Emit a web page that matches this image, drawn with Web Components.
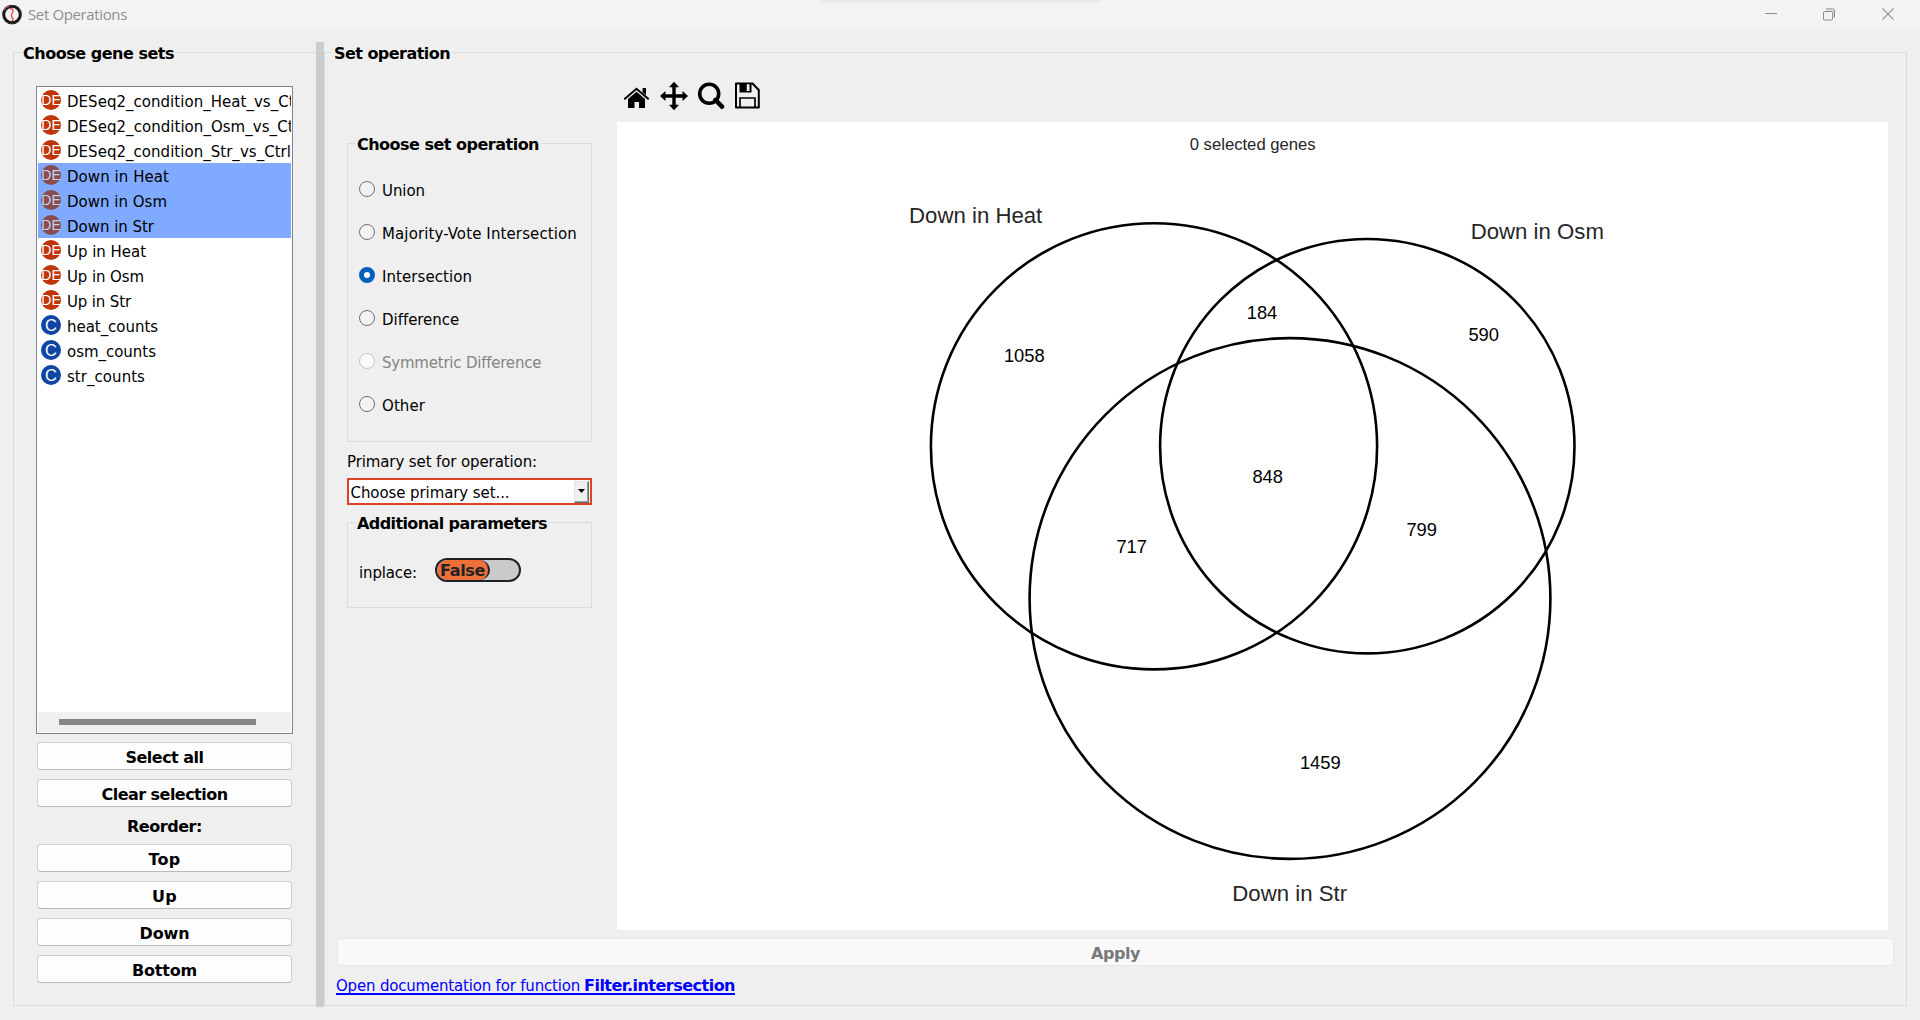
<!DOCTYPE html>
<html lang="en">
<head>
<meta charset="utf-8">
<title>Set Operations</title>
<style>
html,body{margin:0;padding:0}
body{width:1920px;height:1020px;overflow:hidden;background:#efefef;color:#000;font:16.67px/20px "DejaVu Sans Condensed","DejaVu Sans",sans-serif}
</style>
</head>
<body>
<set-operations-window></set-operations-window>
<script>
const define = (name, html, after) => {
  const tpl = document.createElement('template');
  tpl.innerHTML = html;
  customElements.define(name, class extends HTMLElement {
    constructor() {
      super();
      this.attachShadow({mode: 'open'}).append(tpl.content.cloneNode(true));
    }
    connectedCallback() { if (after) after(this, this.shadowRoot); }
  });
};

// Text run that tracks its letters to occupy the width given in "w".
define('fit-text', `<style>:host{display:inline-block;white-space:pre;flex:none}:host([bold]){font-family:"DejaVu Sans",sans-serif;font-weight:bold;font-size:16px}</style><slot></slot>`, el => {
  const target = parseFloat(el.getAttribute('w'));
  const natural = el.getBoundingClientRect().width;
  if (target && natural) el.style.letterSpacing = (target - natural) / el.textContent.length + 'px';
});

define('title-bar', `<style>
:host{display:flex;height:29px;background:#f3f3f3;align-items:center;box-sizing:border-box;padding:0 26px 0 2px;color:#8f8f8f;font:15px/29px "Open Sans","Noto Sans",sans-serif}
.logo{margin-right:6px}
.glow{flex:1;height:29px;display:flex;justify-content:center;padding-right:0;padding-left:30px}
.glow i{width:280px;height:2px;background:#eaeaea;border-radius:0 0 6px 6px;box-shadow:0 0 3px #e6e6e6}
.ctl{display:flex;gap:47px}
.ctl svg{display:block}
.ctl svg:nth-child(2){margin-left:-1px}
</style>
<svg class="logo" width="20" height="20" viewBox="0 0 20 20"><circle cx="10" cy="9.500" r="8.3" fill="#f6f0f0" stroke="#161616" stroke-width="3"/><circle cx="10" cy="9.500" r="9.3" fill="none" stroke="#555" stroke-width="1" stroke-dasharray="1.5 1"/><path d="M2 5Q4 1.8 7.500 1.300" fill="none" stroke="#e66" stroke-width="1"/><path d="M7.500 3.800C10.500 3 12 5.200 10.500 7.500C9 10 9 11.800 10.700 13.200C11.500 14 11 15.500 9.600 16" fill="none" stroke="#e5484d" stroke-width="1.300"/></svg>
<fit-text w="99">Set Operations</fit-text>
<span class="glow"><i></i></span>
<span class="ctl">
<svg width="12" height="13" viewBox="0 0 12 13"><path d="M0 5.500H12" stroke="#8b8b8b"/></svg>
<svg width="12" height="13" viewBox="0 0 12 13" fill="none" stroke="#8b8b8b"><rect x=".5" y="3.500" width="9" height="8.500" rx="1"/><path d="M3 .9H9.500Q11.500 .9 11.500 3V9.500"/><path d="M3 2.200H9.700Q10.300 2.300 10.300 3V9.500" stroke="#cfcfcf"/></svg>
<svg width="12" height="13" viewBox="0 0 12 13"><path d="M.4 .4L11.600 11.600M11.600 .4L.4 11.600" stroke="#8b8b8b" stroke-width="1.100"/></svg>
</span>`);

define('group-box', `<style>
:host{display:flex;flex-direction:column;box-sizing:border-box;border:1px solid #dcdcdc;align-items:stretch}
h2{box-sizing:border-box;font:bold 16px/20px "DejaVu Sans",sans-serif;margin:-10px 0 0 7px;padding:1px 2px 0 2px;height:20px;background:#efefef;align-self:flex-start}
</style><h2><slot name="title"></slot></h2><slot></slot>`);

define('push-button', `<style>
:host{display:flex;box-sizing:border-box;height:28px;border:1px solid #d0d0d0;border-bottom-color:#b9b9b9;border-radius:4px;background:#fdfdfd;align-items:center;justify-content:center;padding-top:3px}
:host([disabled]){background:#f9f9f9;border-color:#e8e8e8;color:#787878}
</style><slot></slot>`);

define('set-item', `<style>
:host{display:flex;height:25px;box-sizing:border-box;padding-left:3px;overflow:hidden;white-space:nowrap;--tone:#c0360c;--ink:#fff}
:host([kind="C"]){--tone:#0f45a3}
:host([selected]){background:#7faaff;--tone:#8b4d4b;--ink:#bfd4f5}
svg{flex:none;margin:2px 6px 0 0}
svg text{fill:var(--ink);text-anchor:middle;font-family:"Liberation Sans",sans-serif}
circle{fill:var(--tone)}
.label{line-height:27px}
</style><svg width="20" height="20" viewBox="0 0 20 20"><circle cx="10" cy="10" r="10"/><text x="10" y="15" font-size="14"></text></svg><span class="label"><slot></slot></span>`,
(el, root) => {
  const t = root.querySelector('text');
  t.textContent = el.getAttribute('kind');
  if (el.getAttribute('kind') === 'C') { t.setAttribute('font-size', 16.5); t.setAttribute('y', 16); }
});

define('set-list', `<style>
:host{display:flex;flex-direction:column;box-sizing:border-box;width:257px;height:648px;border:1px solid #7f858d;background:#fff;padding:1px}
.items{flex:1;overflow:hidden}
.bar{height:20px;background:#f0f0f0;display:flex;align-items:center;padding-left:21px}
.bar i{width:197px;height:6px;background:#868686}
</style><div class="items"><slot></slot></div><div class="bar"><i></i></div>`);

define('radio-option', `<style>
:host{display:flex;align-items:center;height:43px}
i{box-sizing:border-box;width:16px;height:16px;border:1px solid #6f6f6f;border-radius:50%;background:#f3f3f3;margin-right:7px;flex:none}
:host([checked]) i{border:5px solid #0060bb;background:#fff}
:host([disabled]){color:#848484}
:host([disabled]) i{border-color:#c6c6c6;background:#f9f9f9}
span{padding-top:5px}
</style><i></i><span><slot></slot></span>`);

define('combo-box', `<style>
:host{display:flex;box-sizing:border-box;width:245px;height:27px;border:2px solid #dc4326;background:#fff;padding:0 1px 0 1.500px}
span{flex:1;line-height:25px}
b{box-sizing:border-box;width:15px;height:22px;margin-top:1px;background:#f0f0f0;border:1px solid #e3e3e3;border-right:1px solid #696969;border-bottom:1px solid #696969;box-shadow:inset -1px -1px #a0a0a0;display:flex;justify-content:center;padding-top:7px}
svg{display:block}
</style><span><slot></slot></span><b><svg width="7" height="4" viewBox="0 0 7 4"><path d="M0 0H7L3.500 4Z"/></svg></b>`);

define('toggle-switch', `<style>
:host{display:flex;box-sizing:border-box;width:86px;height:24px;border:2px solid #202027;border-radius:12px;background:#cacaca;overflow:hidden}
b{box-sizing:border-box;width:53px;height:20px;border-right:2px solid #202027;border-radius:10px;background:#ec7038;color:#222;line-height:22px;padding-left:3px}
</style><b><slot></slot></b>`);

define('plot-toolbar', `<style>
:host{display:flex;height:30px;align-items:flex-start}
svg{display:block}
</style>
<svg width="27" height="30" viewBox="0 0 27 30"><path d="M1.300 18.300L13.500 7.800L25.700 18.300" fill="none" stroke="#000" stroke-width="2.100"/><path d="M19.600 7H23V14L19.600 11.200Z"/><path d="M13.500 10.700L22 18V27H16V21H11.500V27H5V18Z"/></svg>
<svg style="margin-left:9px" width="30" height="30" viewBox="0 0 30 30"><path d="M15 .7L20 6.300H16.700V13.300H23.500V10L29 15L23.500 20V16.700H16.700V23.700H20L15 29.300L10 23.700H13.300V16.700H6.500V20L1 15L6.500 10V13.300H13.300V6.300H10Z"/></svg>
<svg style="margin-left:8px" width="28" height="30" viewBox="0 0 28 30"><circle cx="12.200" cy="12.700" r="9.500" fill="none" stroke="#000" stroke-width="3.600"/><path d="M18.500 19L25 25.700" stroke="#000" stroke-width="4.600" stroke-linecap="round"/></svg>
<svg style="margin-left:9px" width="27" height="30" viewBox="0 0 27 30"><path d="M2 2.500H18.500L24.800 9V26.500H2Z" fill="none" stroke="#000" stroke-width="2" stroke-linejoin="round"/><path d="M5.500 2H17.500V11.500H5.500Z"/><path d="M12.700 3.300H15.500V10H12.700Z" fill="#efefef"/><path d="M6 26V17H21V26" fill="none" stroke="#000" stroke-width="1.700"/></svg>`);

define('venn-plot', `<style>
:host{display:block;width:1271px;height:808px;background:#fff}
svg{display:block}
circle{fill:none;stroke:#000;stroke-width:2.600}
text{font-family:"Liberation Sans",Arial,sans-serif;text-anchor:middle;font-size:18.330px;fill:#000}
.set{font-size:22.200px;fill:#262626}
.head{font-size:16.670px;fill:#262626}
</style>
<svg width="1271" height="808" viewBox="617 122 1271 808">
<circle cx="1154" cy="446.300" r="223.100"/><circle cx="1367.300" cy="446.200" r="207.200"/><circle cx="1290" cy="598.500" r="260.400"/>
<text class="head" x="1252.700" y="150">0 selected genes</text>
<text class="set" x="975.700" y="222.500">Down in Heat</text>
<text class="set" x="1537.300" y="238.500">Down in Osm</text>
<text class="set" x="1289.700" y="901">Down in Str</text>
<text x="1024.300" y="362.400">1058</text><text x="1262" y="319.400">184</text><text x="1483.700" y="341">590</text>
<text x="1267.700" y="483.400">848</text><text x="1421.700" y="536.400">799</text><text x="1131.700" y="553.400">717</text><text x="1320.300" y="769.400">1459</text>
</svg>`);

define('gene-set-panel', `<style>
:host{display:block}
group-box{width:303px;height:954px;border-right:0}
.col{display:flex;flex-direction:column;margin:23px 23px 0 22px}
.buttons{display:flex;flex-direction:column;gap:9px;padding:8px 1px 0}
.reorder{align-self:center;line-height:22px;height:20px;margin:0 0 -1px}
</style>
<group-box><fit-text bold slot="title" w="151">Choose gene sets</fit-text>
<div class="col">
<set-list>
<set-item kind="DE"><fit-text w="238">DESeq2_condition_Heat_vs_Ctrl</fit-text></set-item>
<set-item kind="DE"><fit-text w="237">DESeq2_condition_Osm_vs_Ctrl</fit-text></set-item>
<set-item kind="DE"><fit-text w="224">DESeq2_condition_Str_vs_Ctrl</fit-text></set-item>
<set-item kind="DE" selected><fit-text w="102">Down in Heat</fit-text></set-item>
<set-item kind="DE" selected><fit-text w="100">Down in Osm</fit-text></set-item>
<set-item kind="DE" selected><fit-text w="87">Down in Str</fit-text></set-item>
<set-item kind="DE"><fit-text w="79">Up in Heat</fit-text></set-item>
<set-item kind="DE"><fit-text w="77">Up in Osm</fit-text></set-item>
<set-item kind="DE"><fit-text w="64">Up in Str</fit-text></set-item>
<set-item kind="C"><fit-text w="91">heat_counts</fit-text></set-item>
<set-item kind="C"><fit-text w="89">osm_counts</fit-text></set-item>
<set-item kind="C"><fit-text w="78">str_counts</fit-text></set-item>
</set-list>
<div class="buttons">
<push-button><fit-text bold w="78">Select all</fit-text></push-button>
<push-button><fit-text bold w="126">Clear selection</fit-text></push-button>
<div class="reorder"><fit-text bold w="75">Reorder:</fit-text></div>
<push-button><fit-text bold w="32">Top</fit-text></push-button>
<push-button><fit-text bold w="25">Up</fit-text></push-button>
<push-button><fit-text bold w="50">Down</fit-text></push-button>
<push-button><fit-text bold w="65">Bottom</fit-text></push-button>
</div>
</div></group-box>`);

define('operation-panel', `<style>
:host{display:block}
.outer{width:1583px;height:954px;border-left-color:#dcdcdc}
.cols{display:flex;height:868px;padding-left:22px;box-sizing:border-box}
.params{width:245px;display:flex;flex-direction:column;padding-top:80px;box-sizing:border-box;flex:none}
.choose{height:299px}
.radios{padding:13px 0 0 11px}
.primary{height:36px;line-height:20px;padding-top:10px;box-sizing:border-box}
.extra{height:86px;margin-top:17px}
.row{display:flex;padding:24px 0 0 11px}
.row toggle-switch{margin:1px 0 0 18px}
.row>fit-text{padding-top:6px}
.view{margin-left:25px}
plot-toolbar{padding:18px 0 0 6px;height:41px}
push-button{width:1557px;margin:7px 0 0 12px;height:28px}
a{color:#00f;display:flex;width:399px;border-bottom:2px solid #00f;margin:15px 0 0 11px;line-height:20px;height:12px;align-items:flex-end;text-decoration:none;justify-content:space-between}
a fit-text{margin-bottom:-3px}
</style>
<group-box class="outer"><fit-text bold slot="title" w="116">Set operation</fit-text>
<div class="cols">
<div class="params">
<group-box class="choose"><fit-text bold slot="title" w="182">Choose set operation</fit-text>
<div class="radios">
<radio-option><fit-text w="43">Union</fit-text></radio-option>
<radio-option><fit-text w="195">Majority-Vote Intersection</fit-text></radio-option>
<radio-option checked><fit-text w="90">Intersection</fit-text></radio-option>
<radio-option><fit-text w="77">Difference</fit-text></radio-option>
<radio-option disabled><fit-text w="159">Symmetric Difference</fit-text></radio-option>
<radio-option><fit-text w="43">Other</fit-text></radio-option>
</div></group-box>
<div class="primary"><fit-text w="190">Primary set for operation:</fit-text></div>
<combo-box><fit-text w="159">Choose primary set...</fit-text></combo-box>
<group-box class="extra"><fit-text bold slot="title" w="190">Additional parameters</fit-text>
<div class="row"><fit-text w="58">inplace:</fit-text><toggle-switch><fit-text bold w="45">False</fit-text></toggle-switch></div>
</group-box>
</div>
<div class="view"><plot-toolbar></plot-toolbar><venn-plot></venn-plot></div>
</div>
<push-button disabled><fit-text bold w="49">Apply</fit-text></push-button>
<a href="#"><fit-text w="244">Open documentation for function</fit-text><fit-text bold w="151">Filter.intersection</fit-text></a>
</group-box>`);

define('set-operations-window', `<style>
:host{display:flex;flex-direction:column;width:1920px;height:1020px}
main{display:flex;padding:13px 0 0 13px;height:965px}
gene-set-panel,operation-panel{padding-top:10px}
.split{width:8px;background:#c9cdd0}
</style>
<title-bar></title-bar>
<main><gene-set-panel></gene-set-panel><div class="split"></div><operation-panel></operation-panel></main>`);
</script>
</body>
</html>
